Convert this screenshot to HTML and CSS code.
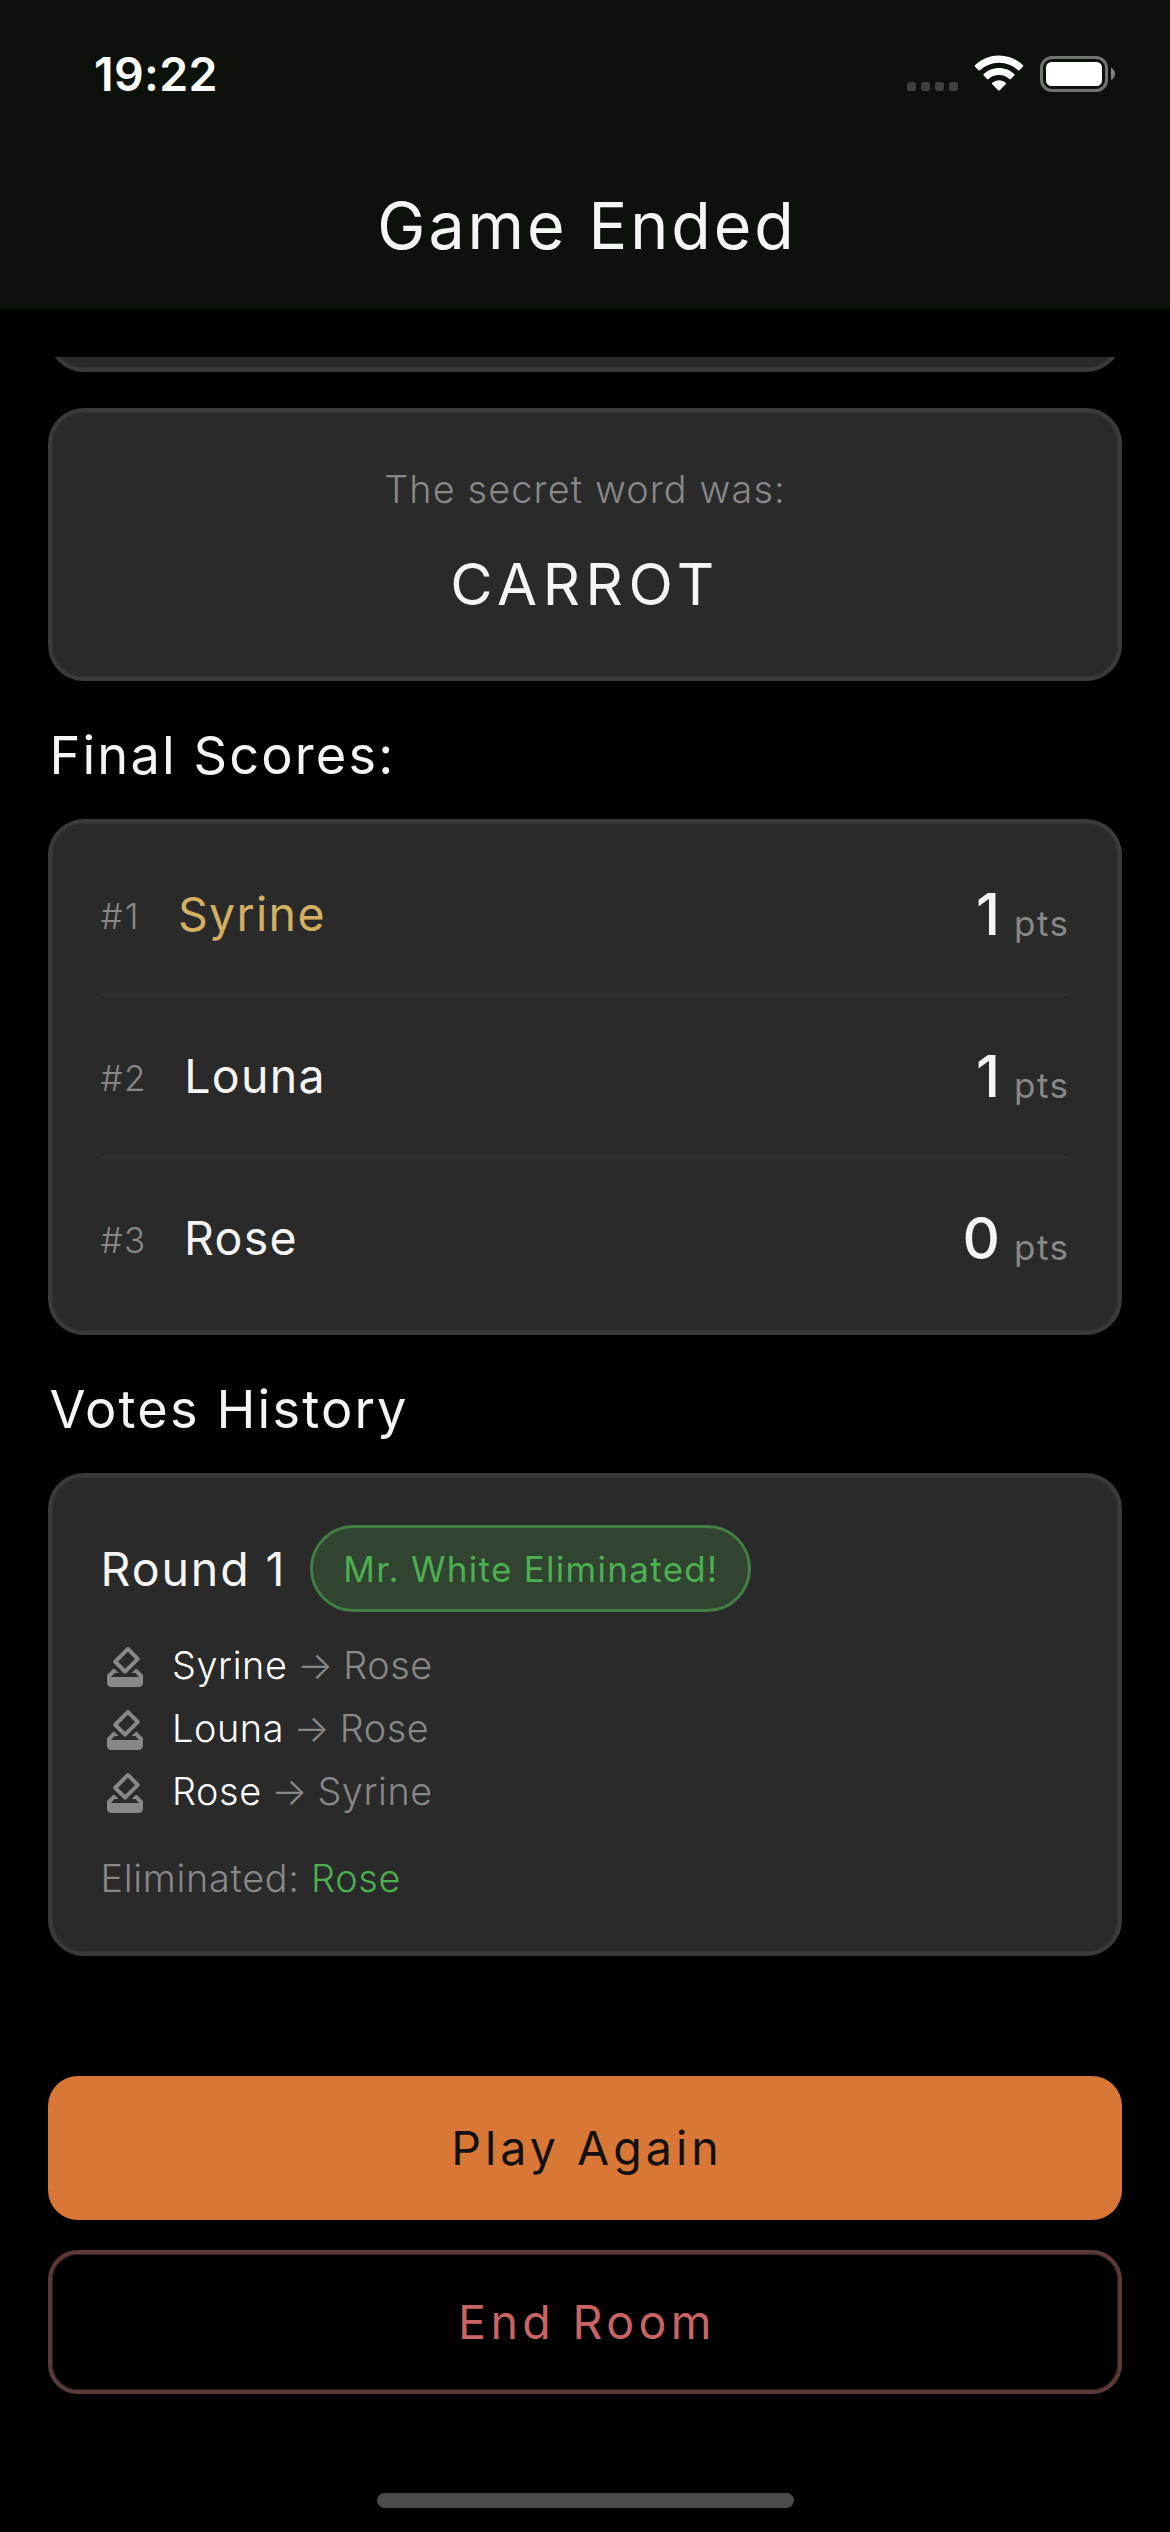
FILE: index.html
```
<!DOCTYPE html>
<html lang="en">
<head>
<meta charset="utf-8">
<title>Game Ended</title>
<link rel="stylesheet" href="styles.css">
</head>
<body>
<svg class="defs" aria-hidden="true">
  <symbol id="ballot" viewBox="0 0 24 24">
    <path d="M18 13h-.68l-2 2h1.91L19 17H5l1.78-2h2.05l-2-2H6l-3 3v4c0 1.1.89 2 1.99 2H19c1.1 0 2-.89 2-2v-4l-3-3zm-1-5.05l-4.95 4.95-3.54-3.54 4.95-4.95L17 7.95zm-4.24-5.66L6.39 8.66c-.39.39-.39 1.02 0 1.41l4.95 4.95c.39.39 1.02.39 1.41 0l6.36-6.36c.39-.39.39-1.02 0-1.41L14.16 2.3c-.38-.4-1.01-.4-1.4-.01z"/>
  </symbol>
</svg>
<div class="screen">
  <header class="app-bar">
    <div class="status-bar">
      <span class="clock">19:22</span>
      <svg class="status-icons" viewBox="0 0 210 40" fill="#fff">
        <g fill="#3d413c">
          <rect x="0" y="28" width="9" height="9" rx="2.8"/>
          <rect x="14" y="28" width="9" height="9" rx="2.8"/>
          <rect x="28" y="28" width="9" height="9" rx="2.8"/>
          <rect x="42" y="28" width="9" height="9" rx="2.8"/>
        </g>
        <path d="M92 1.500c9.200 0 17.600 3.600 23.900 9.600.5.5.5 1.100 0 1.600l-3.400 3.500c-.4.4-1 .4-1.500 0A27.600 27.600 0 0 0 92 8.700a27.600 27.600 0 0 0-19 7.500c-.5.4-1.100.4-1.500 0l-3.400-3.500c-.5-.5-.5-1.100 0-1.600A34.600 34.600 0 0 1 92 1.500z"/>
        <path d="M92 14c5.900 0 11.300 2.300 15.300 6 .5.5.5 1.100 0 1.600l-3.400 3.500c-.5.4-1 .4-1.500 0A15.200 15.200 0 0 0 92 21.100c-4 0-7.700 1.500-10.400 4-.5.4-1 .4-1.500 0l-3.400-3.500c-.5-.5-.5-1.100 0-1.600 4-3.700 9.400-6 15.300-6z"/>
        <path d="M92 26.200c2.600 0 4.900.9 6.700 2.500.5.5.5 1.100 0 1.600l-5.900 6c-.5.5-1.100.5-1.600 0l-5.900-6c-.5-.5-.5-1.100 0-1.600a10 10 0 0 1 6.700-2.500z"/>
        <rect x="134.500" y="3.500" width="65" height="33" rx="10.500" fill="none" stroke="#70746f" stroke-width="3"/>
        <rect x="139" y="8" width="56" height="24" rx="5.500"/>
        <path d="M204 13.800c2.500 1 4 3.400 4 6s-1.500 5.200-4 6.200z" fill="#80847f"/>
      </svg>
    </div>
    <h1 class="app-title">Game Ended</h1>
  </header>

  <main class="results">
    <section class="card card-scrolled"></section>

    <section class="card secret">
      <p class="secret-label">The secret word was:</p>
      <p class="secret-word">CARROT</p>
    </section>

    <h2 class="heading">Final Scores:</h2>
    <section class="card scores">
      <div class="score-row">
        <span class="rank rank-first">#1</span><span class="player winner">Syrine</span>
        <span class="points">1</span><span class="unit">pts</span>
      </div>
      <div class="score-row">
        <span class="rank">#2</span><span class="player">Louna</span>
        <span class="points">1</span><span class="unit">pts</span>
      </div>
      <div class="score-row">
        <span class="rank">#3</span><span class="player">Rose</span>
        <span class="points">0</span><span class="unit">pts</span>
      </div>
    </section>

    <h2 class="heading">Votes History</h2>
    <section class="card round">
      <div class="round-head">
        <h3 class="round-title">Round 1</h3>
        <span class="badge">Mr. White Eliminated!</span>
      </div>
      <ul class="votes">
        <li class="vote"><svg class="vote-icon"><use href="#ballot"/></svg><span class="voter">Syrine</span><span class="arrow">→</span><span>Rose</span></li>
        <li class="vote"><svg class="vote-icon"><use href="#ballot"/></svg><span class="voter">Louna</span><span class="arrow">→</span><span>Rose</span></li>
        <li class="vote"><svg class="vote-icon"><use href="#ballot"/></svg><span class="voter">Rose</span><span class="arrow">→</span><span>Syrine</span></li>
      </ul>
      <p class="eliminated">Eliminated: <span class="eliminated-name">Rose</span></p>
    </section>
  </main>

  <footer class="actions">
    <button class="button button-primary">Play Again</button>
    <button class="button button-danger">End Room</button>
    <div class="home-indicator"></div>
  </footer>
</div>
</body>
</html>
```
FILE: styles.css
```
* { box-sizing: border-box; margin: 0; padding: 0; }

body {
  background: #000;
  color: #f5f5f5;
  font-family: Inter, "Liberation Sans", sans-serif;
  font-weight: 400;
}

.defs { display: none; }

.screen {
  display: flex;
  flex-direction: column;
  width: 1170px;
  height: 2532px;
  overflow: hidden;
}

/* App bar */
.app-bar { height: 309px; background: #0c110c; }

.status-bar {
  display: flex;
  justify-content: space-between;
  align-items: center;
  height: 141px;
  padding: 7px 53px 0 94px;
}

.clock {
  color: #fff;
  font-size: 46.5px;
  font-weight: 600;
  letter-spacing: 0.35px;
}

.status-icons { width: 210px; height: 40px; }

.app-title {
  padding: 1px 0 0 4px;
  font-size: 64.5px;
  font-weight: 400;
  line-height: 168px;
  letter-spacing: 2.92px;
  text-align: center;
}

/* Scrolling results */
.results {
  height: 1671px;
  margin-top: 48px;
  padding: 0 48px;
  overflow: hidden;
}

.card {
  border: 4px solid #3a3a3a;
  border-radius: 36px;
  background: #2a2a2a;
  box-shadow: inset 0 0 0 1px #323232;
}

.card-scrolled { height: 120px; margin-top: -105px; }

.secret {
  height: 273px;
  margin-top: 36px;
  padding-top: 48.5px;
  text-align: center;
}

.secret-label {
  color: #888;
  font-size: 37.8px;
  font-weight: 300;
  line-height: 57px;
  letter-spacing: 1.15px;
}

.secret-word {
  margin-top: 30px;
  font-size: 58px;
  line-height: 72px;
  letter-spacing: 5.63px;
}

.heading {
  margin: 42px 0 32px;
  padding-left: 1.5px;
  font-size: 52.3px;
  font-weight: 400;
  line-height: 64px;
  letter-spacing: 2.15px;
}

.scores { padding: 11px 48.5px 10.5px; }

.score-row {
  display: flex;
  align-items: center;
  height: 162px;
  border-bottom: 2px solid #313131;
}

.score-row:last-child { border-bottom-color: transparent; }

.rank {
  padding-top: 3px;
  color: #888;
  font-size: 35px;
  font-weight: 300;
  letter-spacing: 1.3px;
}

.rank-first { letter-spacing: 2px; }

.player {
  flex: 1;
  margin-left: 37.5px;
  font-size: 46.5px;
  letter-spacing: 1.3px;
}

.winner { color: #d4af61; }

.points {
  font-size: 58px;
  font-weight: 500;
  line-height: 72px;
}

.unit {
  margin-left: 14px;
  padding-top: 17px;
  color: #888;
  font-size: 35px;
  letter-spacing: 1.5px;
}

/* Vote history */
.round { height: 483px; padding: 48.5px 48.5px 0; }

.round-head { display: flex; align-items: center; gap: 24px; }

.round-title {
  font-size: 46.5px;
  font-weight: 400;
  letter-spacing: 1.89px;
}

.badge {
  height: 87px;
  padding: 0 30px;
  border: 3px solid #417f44;
  border-radius: 44px;
  background: #314431;
  color: #4caf50;
  font-size: 35px;
  line-height: 83px;
  letter-spacing: 1.29px;
}

.votes { margin-top: 23px; list-style: none; }

.vote,
.eliminated {
  color: #888;
  font-size: 37.8px;
  font-weight: 300;
  letter-spacing: 0.6px;
}

.vote {
  display: flex;
  align-items: center;
  height: 63px;
  line-height: 50px;
}

.vote span { margin-bottom: 3px; }

.vote-icon { width: 48px; height: 48px; margin-right: 23.5px; fill: #888; }

.voter { color: #fff; }

.vote .arrow { margin: 0 9.5px 3px; }

.eliminated { margin-top: 26px; line-height: 57px; letter-spacing: 0.72px; }

.eliminated-name { color: #4caf50; }

/* Actions */
.actions {
  display: flex;
  flex-direction: column;
  gap: 30px;
  padding: 48px 48px 0;
}

.button {
  height: 144px;
  border: 0;
  border-radius: 30px;
  background: transparent;
  font: 400 46.5px Inter, "Liberation Sans", sans-serif;
}

.button-primary {
  padding-left: 4px;
  background: #d97736;
  color: #111;
  letter-spacing: 4.05px;
}

.button-danger {
  padding-left: 4px;
  border: 4px solid #5c3a3a;
  box-shadow: inset 0 0 0 1px #2e1d1d;
  color: #c96464;
  letter-spacing: 4.4px;
}

.home-indicator {
  align-self: center;
  width: 417px;
  height: 15px;
  margin-top: 69px;
  border-radius: 8px;
  background: #4b4b4b;
}
```
